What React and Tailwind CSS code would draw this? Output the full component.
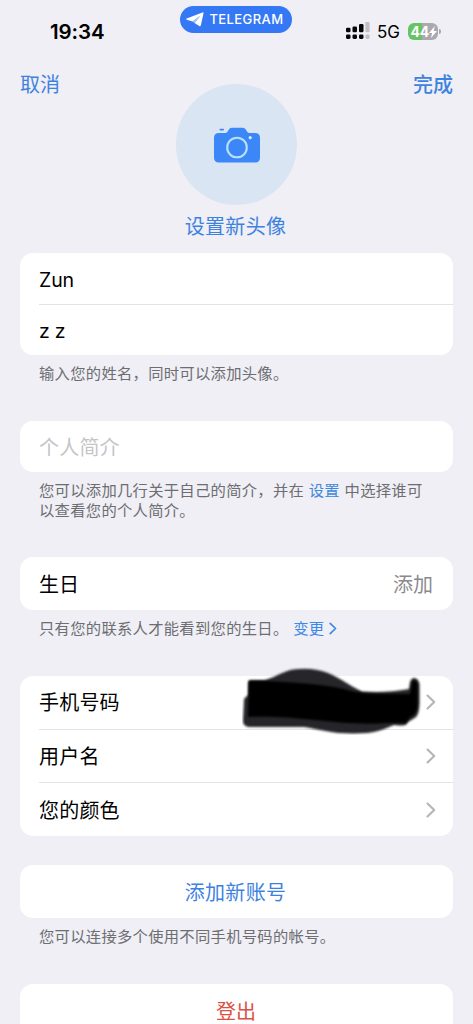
import { useState } from "react";

const accountRows = [
    { id: "phone", label: "手机号码", hidden: true },
    { id: "username", label: "用户名" },
    { id: "color", label: "您的颜色" },
];

function Chevron({ className }) {
    return (
        <svg viewBox="0 0 10 16" className={className} fill="none" stroke="currentColor">
            <path d="M1.5 1.5 8.2 8 1.5 14.5" strokeWidth="2.1" strokeLinecap="round" strokeLinejoin="round" />
        </svg>
    );
}

function SignalIcon() {
    return (
        <svg viewBox="0 0 24 18" className="mb-px h-[18px] w-6">
            <g fill="#050507">
                <rect x="0" y="5.8" width="4.5" height="4.4" rx="1.3" />
                <rect x="6.5" y="4.5" width="4.5" height="5.7" rx="1.3" />
                <rect x="13" y="2" width="4.5" height="8.2" rx="1.3" />
                <rect x="0" y="12.4" width="4.5" height="4.5" rx="1.3" />
                <rect x="6.5" y="12.4" width="4.5" height="4.5" rx="1.3" />
                <rect x="13" y="12.4" width="4.5" height="4.5" rx="1.3" />
            </g>
            <g fill="#bfbfc5">
                <rect x="19.4" y="0" width="4.2" height="10.2" rx="1.3" />
                <rect x="19.4" y="12.4" width="4.2" height="4.5" rx="1.3" />
            </g>
        </svg>
    );
}

function Battery() {
    return (
        <div className="flex items-center">
            <div className="flex h-[17px] w-[30px] items-center overflow-hidden rounded-[6px] bg-linear-to-r from-[#67c466] from-48% to-[#aaaaae] to-48% pl-[2.5px] text-white">
                <span className="text-[14px] leading-none font-bold tracking-[-0.2px]">44</span>
                <svg viewBox="0 0 8 12" className="h-[12px] w-[8px] shrink-0" fill="currentColor">
                    <path d="M5.8 0 0 6.9h3.1L2 12l6-7H4.7z" />
                </svg>
            </div>
            <div className="ml-px h-[5px] w-[2px] rounded-r-full bg-[#aaaaae]" />
        </div>
    );
}

function StatusBar() {
    return (
        <div className="grid h-[68px] grid-cols-3 items-start">
            <div className="pt-[21px] pl-[50px] text-[20.5px] leading-[21px] font-semibold tracking-[-0.1px]">19:34</div>
            <div className="mt-[6px] flex h-[27px] w-[112px] items-center gap-[5px] justify-self-center rounded-full bg-[#3478f6] pl-[6px] text-white">
                <svg viewBox="0 0 18 15" className="h-[15px] w-[18px] shrink-0" fill="currentColor">
                    <path d="M.7 6.6 16.4.4c.8-.3 1.3.1 1.1 1l-2.7 12.1c-.2.8-.8 1-1.5.6L8.5 10.9l5.6-6.8-7.600 5.300L.9 7.800C0 7.500-.1 6.900.7 6.600Z" />
                    <path d="M6.500 9.400 8.500 10.900 14.100 4.100Z" fill="#a9c6fb" />
                </svg>
                <span className="text-[13px] leading-none font-medium tracking-[0.4px]">TELEGRAM</span>
            </div>
            <div className="flex items-center justify-self-end pt-[22px] pr-[32px]">
                <SignalIcon />
                <span className="mt-px mr-[8px] ml-[7px] text-[17px] leading-[18px]">5G</span>
                <Battery />
            </div>
        </div>
    );
}

function Camera() {
    return (
        <svg viewBox="0 0 46 36" className="h-9 w-[46px]">
            <rect x="5.5" y="1.8" width="4.5" height="1.7" rx=".8" fill="#3b87f7" />
            <path d="M5 6h6.3c1.4 0 2-.7 2.8-2.2C15.2 1.6 16 .7 18 .7h10.5c2 0 3 .9 4.1 3.1C33.4 5.3 34 6 35.4 6H41c3.3 0 5 1.7 5 5v19.5c0 3.3-1.7 5-5 5H5c-3.3 0-5-1.7-5-5V11c0-3.3 1.7-5 5-5Z" fill="#3b87f7" />
            <circle cx="23" cy="20.5" r="9.8" fill="none" stroke="#b9e0fa" strokeWidth="2.1" />
            <circle cx="36.2" cy="10.7" r="1.6" fill="#d8ecfb" />
        </svg>
    );
}

// brush marks that cover the phone number
function Redaction() {
    return (
        <svg viewBox="0 0 180 68" className="absolute -top-[9px] left-[222px] z-10 h-[68px] w-[180px]">
            <defs>
                <filter id="soft" x="-5%" y="-10%" width="110%" height="120%">
                    <feGaussianBlur stdDeviation="0.8" />
                </filter>
                <filter id="softer" x="-5%" y="-10%" width="110%" height="120%">
                    <feGaussianBlur stdDeviation="1.3" />
                </filter>
            </defs>
            <path filter="url(#soft)" d="M2 32 6 28V16Q6 13 9 13H23C36 9 42 4 51 2.5C62 1 73 1 86 6C98 11 108 19 120 24.500C134 25.500 152 25 167 22L168 15C170 9 176 10 177.500 17V37C177 45 176 50 171 52L166 55C164 59 162 59 152 58C140 63 132 66.500 113 66.500C92 67 80 63 62 60H9C4 60 1 58 1 54Z" fill="#26262b" />
            <path filter="url(#softer)" d="M7 14H24C48 15 80 17 102 22C114 26 126 27 142 27H168L170 16C171 12 175 13 175.500 18V37C175 45 173 48 168 50L164 56H145C120 58 92 55 72 53C46 50 25 49 6 50Z" fill="#000" />
        </svg>
    );
}

function Note({ children }) {
    return <p className="px-[19px] text-[15.3px] leading-[19.5px] tracking-[0.3px] text-[#6d6d72]">{children}</p>;
}

export default function App() {
    const [firstName, setFirstName] = useState("Zun");
    const [lastName, setLastName] = useState("z z");
    const [bio, setBio] = useState("");

    return (
        <div className="h-screen w-full overflow-hidden bg-[#efeff5] font-[Inter,'Noto_Sans_CJK_SC',sans-serif] text-black">
            <StatusBar />

            <header className="flex items-start justify-between px-[20px] text-[20px] leading-[30px] text-[#3e82e0]">
                <button type="button" className="w-[60px] pt-[2px] text-left">取消</button>
                <div className="flex flex-col items-center pt-[16px]">
                    <div className="flex size-[121px] items-center justify-center rounded-full bg-[#d9e5f2]">
                        <Camera />
                    </div>
                    <button type="button" className="mt-[7px] -ml-[2px] tracking-[0.3px]">设置新头像</button>
                </div>
                <button type="button" className="w-[60px] pt-[2px] text-right font-medium">完成</button>
            </header>

            <main className="mt-[11px] px-[20px]">
                <div className="rounded-[13px] bg-white pl-[19px]">
                    <input
                        value={firstName}
                        onChange={(e) => setFirstName(e.target.value)}
                        className="block h-[51.5px] w-full border-b border-[#e3e3e6] pt-[3px] text-[19.5px] tracking-[-0.1px] outline-none"
                    />
                    <input
                        value={lastName}
                        onChange={(e) => setLastName(e.target.value)}
                        className="block h-[50.5px] w-full pt-[2px] text-[19.5px] tracking-[-0.2px] outline-none"
                    />
                </div>
                <div className="h-[66px] pt-[9px]">
                    <Note>输入您的姓名，同时可以添加头像。</Note>
                </div>

                <div className="rounded-[13px] bg-white px-[19px]">
                    <input
                        value={bio}
                        onChange={(e) => setBio(e.target.value)}
                        placeholder="个人简介"
                        className="block h-[51px] w-full pt-[2px] text-[20px] tracking-[0.2px] outline-none placeholder:text-[#c5c5c8]"
                    />
                </div>
                <div className="h-[85px] pt-[9px]">
                    <Note>
                        您可以添加几行关于自己的简介，并在 <a className="text-[#3e88dc]">设置</a> 中选择谁可以查看您的个人简介。
                    </Note>
                </div>

                <div className="flex h-[53px] items-center justify-between rounded-[13px] bg-white pt-[2px] pr-[20px] pl-[19px] text-[20px]">
                    <span>生日</span>
                    <span className="text-[#8a8a8e]">添加</span>
                </div>
                <div className="h-[66px] pt-[9px]">
                    <Note>
                        只有您的联系人才能看到您的生日。{" "}
                        <a className="inline-flex items-center gap-[5px] text-[#3e88e8]">
                            变更 <Chevron className="h-[13px] w-[8px]" />
                        </a>
                    </Note>
                </div>

                <div className="relative rounded-[13px] bg-white pl-[19px] text-[20px]">
                    {accountRows.map((row, i) => (
                        <div
                            key={row.id}
                            className={`flex items-center justify-between pr-[17px] tracking-[0.2px] ${i < accountRows.length - 1 ? "h-[53.5px] border-b border-[#e3e3e6]" : "h-[53px]"}`}
                        >
                            <span className="pt-[2px]">{row.label}</span>
                            {row.hidden && <Redaction />}
                            <Chevron className="h-[16px] w-[10px] text-[#b5b5b8]" />
                        </div>
                    ))}
                </div>

                <button type="button" className="mt-[29px] h-[53px] w-full rounded-[13px] bg-white pt-[2px] pr-[2px] text-[20px] tracking-[0.3px] text-[#3e82e0]">
                    添加新账号
                </button>
                <div className="h-[66px] pt-[9px]">
                    <Note>您可以连接多个使用不同手机号码的帐号。</Note>
                </div>

                <button type="button" className="h-[53px] w-full rounded-[13px] bg-white pt-[2px] pr-px text-[20px] text-[#d95245]">
                    登出
                </button>
            </main>
        </div>
    );
}
